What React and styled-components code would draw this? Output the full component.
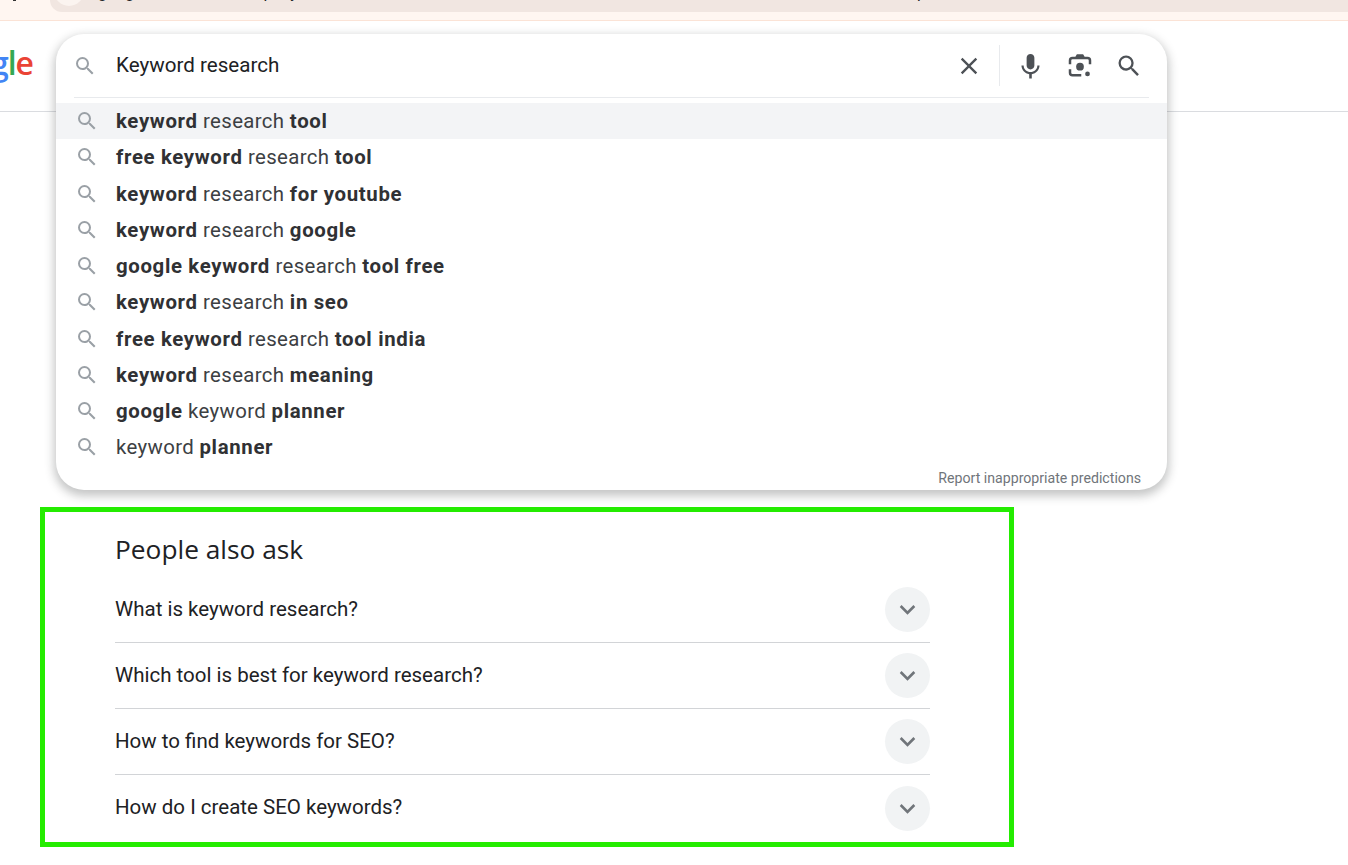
import React from "react";
import styled, { createGlobalStyle } from "styled-components";

const Global = createGlobalStyle`
  html, body { margin: 0; padding: 0; background: #fff; height: 100%; overflow: hidden; }
  body { font-family: Roboto, "Liberation Sans", sans-serif; color: #202124; }
`;
const Page = styled.div`width: 1348px; height: 865px; position: relative; overflow: hidden; background: #fff;`;
const BrowserStrip = styled.div`
  height: 20px; background: #fff6f1; border-bottom: 1px solid #fbe3d6; padding-left: 13px; display: flex; align-items: flex-start;
`;
const NavTick = styled.div`width: 3px; height: 1px; background: #333; flex: none; margin-right: 34px;`;
const AddressBar = styled.div`
  flex: 1; height: 12px; background: #f1e6e1; border-radius: 0 0 0 14px; display: flex; overflow: hidden; padding-left: 4px;
`;
const SiteChip = styled.div`width: 30px; height: 30px; margin-top: -24px; flex: none; border-radius: 50%; background: #fbf4f0; margin-right: 14px;`;
const UrlText = styled.div`font-size: 16px; line-height: 20px; white-space: nowrap; color: #202124; margin-top: -17px;`;
const Header = styled.header`height: 91px; box-sizing: border-box; padding-top: 22px; border-bottom: 1px solid #dadce0; position: relative;`;
const Logo = styled.div`
  width: 33px; height: 40px; overflow: hidden; display: flex; justify-content: flex-end;
  font: 600 32px/40px "Open Sans", sans-serif; letter-spacing: -1px;
`;
const LogoLetter = styled.span`color: ${p => p.$c};`;
const Panel = styled.div`
  position: absolute; left: 56px; top: 13px; width: 1111px; height: 456px; background: #fff; border-radius: 28px;
  box-shadow: 0 4px 10px 2px rgba(32,33,36,.26); z-index: 2; display: flex; flex-direction: column;
`;
const InputRow = styled.div`height: 64px; flex: none; display: flex; align-items: center; padding-left: 17px; position: relative;`;
const InputDivider = styled.div`position: absolute; left: 18px; right: 18px; bottom: 0; height: 1px; background: #e8eaed;`;
const LeadIcon = styled.svg`width: 24px; height: 24px; flex: none; fill: #9aa0a6; margin-right: 19px;`;
const InputText = styled.div`flex: 1; font-size: 20.6px; color: #202124; padding-bottom: 2px;`;
const ActionIcon = styled.button`
  width: 24px; height: 24px; padding: 0 0 1px; border: 0; background: none; flex: none; display: flex; align-items: center; justify-content: center;
  margin-left: ${p => p.$ml}px;
`;
const ActionSvg = styled.svg`width: ${p => p.$size || 28}px; height: ${p => p.$size || 28}px; flex: none; fill: #4d5156;`;
const ActionDivider = styled.div`width: 1px; height: 41px; background: #e8eaed; margin: 0 0 1px 18px; flex: none;`;
const Tail = styled.div`width: 26px; flex: none;`;
const List = styled.ul`list-style: none; margin: 5px 0 0; padding: 0;`;
const Row = styled.li`
  height: 36.25px; display: flex; align-items: center; padding-left: 19px;
  background: ${p => (p.$active ? "#f3f4f6" : "transparent")};
  font-size: 20.4px; color: #3c4043; letter-spacing: .35px; white-space: pre;
  b { font-weight: 700; color: #303134; letter-spacing: .65px; }
`;
const RowIcon = styled.svg`width: 24px; height: 24px; flex: none; fill: #9aa0a6; margin-right: 17px;`;
const Report = styled.div`margin-top: auto; align-self: flex-end; padding: 0 26px 3px 0; font-size: 14.15px; line-height: 18px; color: #70757a;`;
const Content = styled.main`
  margin: 395px 0 0 40px; width: 974px; height: 340px; box-sizing: border-box; border: 5px solid #24ec00;
  padding: 19px 0 0 70px;
`;
const Heading = styled.h2`margin: 0; font: 400 26.3px/36px "Open Sans", Roboto, sans-serif; color: #202124;`;
const Questions = styled.div`width: 815px; margin-top: 10px;`;
const Question = styled.div`
  height: 66px; box-sizing: border-box; display: flex; align-items: center; justify-content: space-between;
  border-bottom: ${p => (p.$last ? "none" : "1px solid #d2d4d7")};
  font-size: 20.5px; color: #202124;
`;
const QuestionText = styled.span`padding-bottom: 2px;`;
const Toggle = styled.div`width: 45px; height: 45px; border-radius: 50%; background: #f1f3f4; display: flex; align-items: center; justify-content: center;`;
const Chevron = styled.svg`width: 31px; height: 31px; fill: #70757a;`;

const SEARCH = "M15.5 14h-.79l-.28-.27A6.47 6.47 0 0 0 16 9.5 6.5 6.5 0 1 0 9.5 16c1.61 0 3.09-.59 4.23-1.57l.27.28v.79l5 4.99L20.49 19l-4.99-5zm-6 0C7.01 14 5 11.99 5 9.5S7.01 5 9.5 5 14 7.01 14 9.5 11.99 14 9.5 14z";

const suggestions = [
  [["keyword", 1], [" research ", 0], ["tool", 1]],
  [["free keyword", 1], [" research ", 0], ["tool", 1]],
  [["keyword", 1], [" research ", 0], ["for youtube", 1]],
  [["keyword", 1], [" research ", 0], ["google", 1]],
  [["google keyword", 1], [" research ", 0], ["tool free", 1]],
  [["keyword", 1], [" research ", 0], ["in seo", 1]],
  [["free keyword", 1], [" research ", 0], ["tool india", 1]],
  [["keyword", 1], [" research ", 0], ["meaning", 1]],
  [["google", 1], [" keyword ", 0], ["planner", 1]],
  [["keyword ", 0], ["planner", 1]],
];
const questions = ["What is keyword research?", "Which tool is best for keyword research?", "How to find keywords for SEO?", "How do I create SEO keywords?"];

export default function App() {
  return (
    <Page>
      <Global />
      <BrowserStrip>
        <NavTick />
        <AddressBar>
          <SiteChip />
          <UrlText>google.com/research?query=Research+AND+intent_source=chrome&client=one&browser=none&start=0&num=10&pn=1&tbm=none&start=10&ved=1t:200715&ictx=111&sa=X&biw=1348&bih=865</UrlText>
        </AddressBar>
      </BrowserStrip>
      <Header>
        <Logo>
          <LogoLetter $c="#4285f4">g</LogoLetter>
          <LogoLetter $c="#34a853">l</LogoLetter>
          <LogoLetter $c="#ea4335">e</LogoLetter>
        </Logo>
        <Panel>
          <InputRow>
            <LeadIcon viewBox="0 0 24 24"><path d={SEARCH} /></LeadIcon>
            <InputText>Keyword research</InputText>
            <ActionIcon $ml={0} aria-label="Clear">
              <ActionSvg viewBox="0 0 24 24"><path d="M19 6.41 17.59 5 12 10.59 6.41 5 5 6.41 10.59 12 5 17.59 6.41 19 12 13.41 17.59 19 19 17.59 13.41 12z" /></ActionSvg>
            </ActionIcon>
            <ActionDivider />
            <ActionIcon $ml={18} aria-label="Voice">
              <ActionSvg $size={31} viewBox="0 0 24 24"><path d="M12 15c1.66 0 3-1.31 3-2.97V5.97C15 4.31 13.66 3 12 3S9 4.31 9 5.97v6.06C9 13.69 10.34 15 12 15zm5.3-3c0 3-2.54 5.1-5.3 5.1S6.7 15 6.7 12H5c0 3.41 2.72 6.23 6 6.72V22h2v-3.28c3.28-.49 6-3.31 6-6.72h-1.7z" /></ActionSvg>
            </ActionIcon>
            <ActionIcon $ml={26} aria-label="Lens">
              <ActionSvg $size={30} viewBox="0 0 24 24"><circle cx="12" cy="12.5" r="3.1" /><circle cx="18" cy="18.3" r="1.9" /><path d="M9.5 2.6h5l1.2 2H18a3 3 0 0 1 3 3V10.5h-2V7.6a1 1 0 0 0-1-1H6a1 1 0 0 0-1 1v2.9H3V7.6a3 3 0 0 1 3-3h2.3zM3 14.5h2v2.9a1 1 0 0 0 1 1h7v2H6a3 3 0 0 1-3-3z" /></ActionSvg>
            </ActionIcon>
            <ActionIcon $ml={25} aria-label="Search">
              <ActionSvg viewBox="0 0 24 24"><path d={SEARCH} /></ActionSvg>
            </ActionIcon>
            <Tail />
            <InputDivider />
          </InputRow>
          <List>
            {suggestions.map((parts, i) => (
              <Row key={i} $active={i === 0}>
                <RowIcon viewBox="0 0 24 24"><path d={SEARCH} /></RowIcon>
                <span>{parts.map(([t, b], j) => (b ? <b key={j}>{t}</b> : t))}</span>
              </Row>
            ))}
          </List>
          <Report>Report inappropriate predictions</Report>
        </Panel>
      </Header>
      <Content>
        <Heading>People also ask</Heading>
        <Questions>
          {questions.map((q, i) => (
            <Question key={q} $last={i === questions.length - 1}>
              <QuestionText>{q}</QuestionText>
              <Toggle>
                <Chevron viewBox="0 0 24 24"><path d="M16.59 8.59 12 13.17 7.41 8.59 6 10l6 6 6-6z" /></Chevron>
              </Toggle>
            </Question>
          ))}
        </Questions>
      </Content>
    </Page>
  );
}
